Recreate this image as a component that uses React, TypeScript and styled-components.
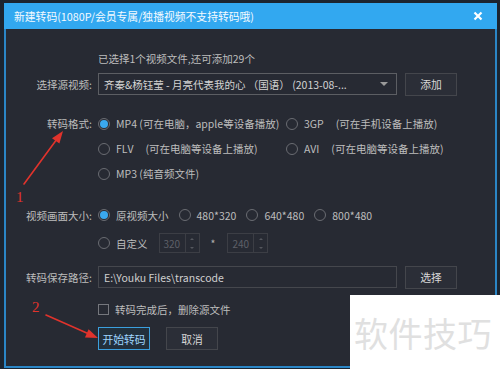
import styled, { createGlobalStyle } from "styled-components"

const GlobalStyle = createGlobalStyle`
  html, body {
    margin: 0;
    padding: 0;
    background: #1c2530;
  }
  body {
    width: 500px;
    height: 369px;
    overflow: hidden;
    font-family: "Noto Sans CJK SC", "Noto Sans", sans-serif;
  }
`

const Page = styled.div`
  position: relative;
  width: 500px;
  height: 369px;
  padding: 3px 3px 1px 4px;
  box-sizing: border-box;
`

const Dialog = styled.div`
  display: flex;
  flex-direction: column;
  width: 493px;
  height: 365px;
`

const TitleBar = styled.div`
  height: 26px;
  flex: none;
  background: #32a8f0;
  display: flex;
  align-items: center;
  justify-content: space-between;
  padding: 0 14px 0 10px;
  color: #f4faff;
  font-size: 10.8px;
`

const CloseBtn = styled.span`
  display: flex;
  width: 10px;
  height: 10px;
`

const Body = styled.div`
  flex: 1;
  background: #272a33;
  border: 2px solid #2b86c6;
  border-top: none;
  padding-top: 22px;
  color: #bdbdbd;
  font-size: 10.5px;
`

const Row = styled.div<{ $mt: number; $h: number; $top?: boolean }>`
  display: flex;
  align-items: ${p => (p.$top ? "flex-start" : "center")};
  margin-top: ${p => p.$mt}px;
  min-height: ${p => p.$h}px;
`

const Label = styled.div<{ $lh?: number }>`
  width: 86px;
  flex: none;
  text-align: right;
  white-space: nowrap;
  line-height: ${p => (p.$lh ? p.$lh + "px" : "normal")};
`

const Field = styled.div`
  margin-left: 6px;
  display: flex;
  align-items: center;
  flex: 1;
`

const Select = styled.div`
  width: 299px;
  height: 22px;
  box-sizing: border-box;
  border: 1px solid #5c5e63;
  display: flex;
  align-items: center;
  justify-content: space-between;
  padding: 0 8px 0 5px;
  color: #d4d4d4;
  white-space: nowrap;
`

const Caret = styled.span`
  width: 0;
  height: 0;
  border-left: 4px solid transparent;
  border-right: 4px solid transparent;
  border-top: 4px solid #9a9a9a;
`

const TextInput = styled.div`
  width: 299px;
  height: 22px;
  box-sizing: border-box;
  border: 1px solid #45474d;
  display: flex;
  align-items: center;
  padding: 0 5px;
  color: #cfcfcf;
`

const Button = styled.div<{ $primary?: boolean }>`
  width: 52px;
  height: 23px;
  box-sizing: border-box;
  display: flex;
  align-items: center;
  justify-content: center;
  border: 1px solid ${p => (p.$primary ? "#3b9fdd" : "#44464c")};
  background: ${p => (p.$primary ? "#22303c" : "#2b2e37")};
  color: ${p => (p.$primary ? "#9fd6ff" : "#d8d8d8")};
  font-size: 10.8px;
`

const SideButton = styled(Button)`
  margin-left: 8px;
`

const OptionGrid = styled.div`
  margin-left: 6px;
  display: grid;
  grid-template-columns: 188px 1fr;
  grid-auto-rows: 25px;
`

const Option = styled.div<{ $span?: boolean }>`
  display: flex;
  align-items: center;
  gap: 6px;
  white-space: nowrap;
  grid-column: ${p => (p.$span ? "1 / span 2" : "auto")};
`

const Dim = styled.span`
  margin-left: 6px;
`

const Radio = styled.span<{ $on?: boolean }>`
  width: 12px;
  height: 12px;
  flex: none;
  box-sizing: border-box;
  border-radius: 50%;
  border: 1px solid #6a6c72;
  display: flex;
  align-items: center;
  justify-content: center;
  &::after {
    content: "";
    width: 8px;
    height: 8px;
    border-radius: 50%;
    background: ${p => (p.$on ? "#3aa9f0" : "transparent")};
  }
`

const SizeBlock = styled.div`
  margin-top: 15px;
`

const SizeRow = styled.div`
  display: flex;
  align-items: center;
  height: 28px;
`

const SizeOptions = styled.div`
  margin-left: 6px;
  display: flex;
  align-items: center;
  gap: 10px;
`

const Spin = styled.div`
  width: 41px;
  height: 20px;
  box-sizing: border-box;
  border: 1px solid #3c3e45;
  display: flex;
  color: #5e6068;
  font-size: 10px;
`

const SpinValue = styled.span`
  flex: 1;
  display: flex;
  align-items: center;
  padding-left: 4px;
`

const SpinArrows = styled.span`
  width: 13px;
  border-left: 1px solid #3c3e45;
  display: flex;
  flex-direction: column;
  align-items: center;
  justify-content: space-around;
  &::before, &::after {
    content: "";
    width: 0;
    height: 0;
    border-left: 2px solid transparent;
    border-right: 2px solid transparent;
  }
  &::before { border-bottom: 2px solid #55575e; }
  &::after { border-top: 2px solid #55575e; }
`

const CustomFields = styled.div`
  margin-left: 11px;
  display: flex;
  align-items: center;
`

const Star = styled.span`
  margin: 0 12px 0 11px;
  color: #b0b0b0;
`

const CheckBox = styled.span`
  width: 11px;
  height: 11px;
  box-sizing: border-box;
  border: 1px solid #75777d;
  margin-right: 6px;
`

const Buttons = styled.div`
  margin-left: 92px;
  margin-top: 10px;
  display: flex;
  gap: 16px;
`

const Annotations = styled.svg`
  position: absolute;
  left: 0;
  top: 0;
  pointer-events: none;
`

const Mark = styled.span<{ $x: number; $y: number }>`
  position: absolute;
  left: ${p => p.$x}px;
  top: ${p => p.$y}px;
  color: #e0332c;
  font-family: "Liberation Serif", serif;
  font-size: 15px;
  line-height: 15px;
`

const Watermark = styled.div`
  position: absolute;
  left: 350px;
  top: 295px;
  width: 150px;
  height: 74px;
  background: #fff;
  color: #e0e0e0;
  font-size: 34px;
  display: flex;
  align-items: center;
  padding-left: 4px;
  box-sizing: border-box;
  letter-spacing: 0.5px;
`

export default function App() {
  return (
    <Page>
      <GlobalStyle />
      <Dialog>
        <TitleBar>
          <span>新建转码(1080P/会员专属/独播视频不支持转码哦)</span>
          <CloseBtn>
            <svg width="10" height="10" viewBox="0 0 10 10">
              <path d="M1.5 1.5 L8.5 8.5 M8.5 1.5 L1.5 8.5" stroke="#fff" strokeWidth="2.2" />
            </svg>
          </CloseBtn>
        </TitleBar>
        <Body>
          <Row $mt={0} $h={14}>
            <Label />
            <Field>已选择1个视频文件,还可添加29个</Field>
          </Row>
          <Row $mt={6} $h={24}>
            <Label>选择源视频:</Label>
            <Field>
              <Select>
                <span>齐秦&amp;杨钰莹 - 月亮代表我的心 （国语） (2013-08-...</span>
                <Caret />
              </Select>
              <SideButton>添加</SideButton>
            </Field>
          </Row>
          <Row $mt={15} $h={75} $top>
            <Label $lh={25}>转码格式:</Label>
            <OptionGrid>
              <Option><Radio $on />MP4 (可在电脑，apple等设备播放)</Option>
              <Option><Radio />3GP<Dim>(可在手机设备上播放)</Dim></Option>
              <Option><Radio />FLV<Dim>(可在电脑等设备上播放)</Dim></Option>
              <Option><Radio />AVI<Dim>(可在电脑等设备上播放)</Dim></Option>
              <Option $span><Radio />MP3 (纯音频文件)</Option>
            </OptionGrid>
          </Row>
          <SizeBlock>
            <SizeRow>
              <Label>视频画面大小:</Label>
              <SizeOptions>
                <Option><Radio $on />原视频大小</Option>
                <Option><Radio />480*320</Option>
                <Option><Radio />640*480</Option>
                <Option><Radio />800*480</Option>
              </SizeOptions>
            </SizeRow>
            <SizeRow>
              <Label />
              <SizeOptions>
                <Option><Radio />自定义</Option>
              </SizeOptions>
              <CustomFields>
                <Spin><SpinValue>320</SpinValue><SpinArrows /></Spin>
                <Star>*</Star>
                <Spin><SpinValue>240</SpinValue><SpinArrows /></Spin>
              </CustomFields>
            </SizeRow>
          </SizeBlock>
          <Row $mt={8} $h={24}>
            <Label>转码保存路径:</Label>
            <Field>
              <TextInput>E:\Youku Files\transcode</TextInput>
              <SideButton>选择</SideButton>
            </Field>
          </Row>
          <Row $mt={12} $h={16}>
            <Label />
            <Field>
              <CheckBox />
              转码完成后，删除源文件
            </Field>
          </Row>
          <Buttons>
            <Button $primary>开始转码</Button>
            <Button>取消</Button>
          </Buttons>
        </Body>
      </Dialog>

      <Annotations width="500" height="369" viewBox="0 0 500 369">
        <path d="M24 184 L57 139" stroke="#e0332c" strokeWidth="1.6" strokeLinecap="round" />
        <polygon points="63,131 59.4,143.6 52,138.2" fill="#e0332c" />
        <path d="M46 315 L89 334" stroke="#e0332c" strokeWidth="1.6" strokeLinecap="round" />
        <polygon points="98,338 85,337.4 88.6,329.2" fill="#e0332c" />
      </Annotations>
      <Mark $x={16} $y={190}>1</Mark>
      <Mark $x={32} $y={300}>2</Mark>

      <Watermark>软件技巧</Watermark>
    </Page>
  )
}
